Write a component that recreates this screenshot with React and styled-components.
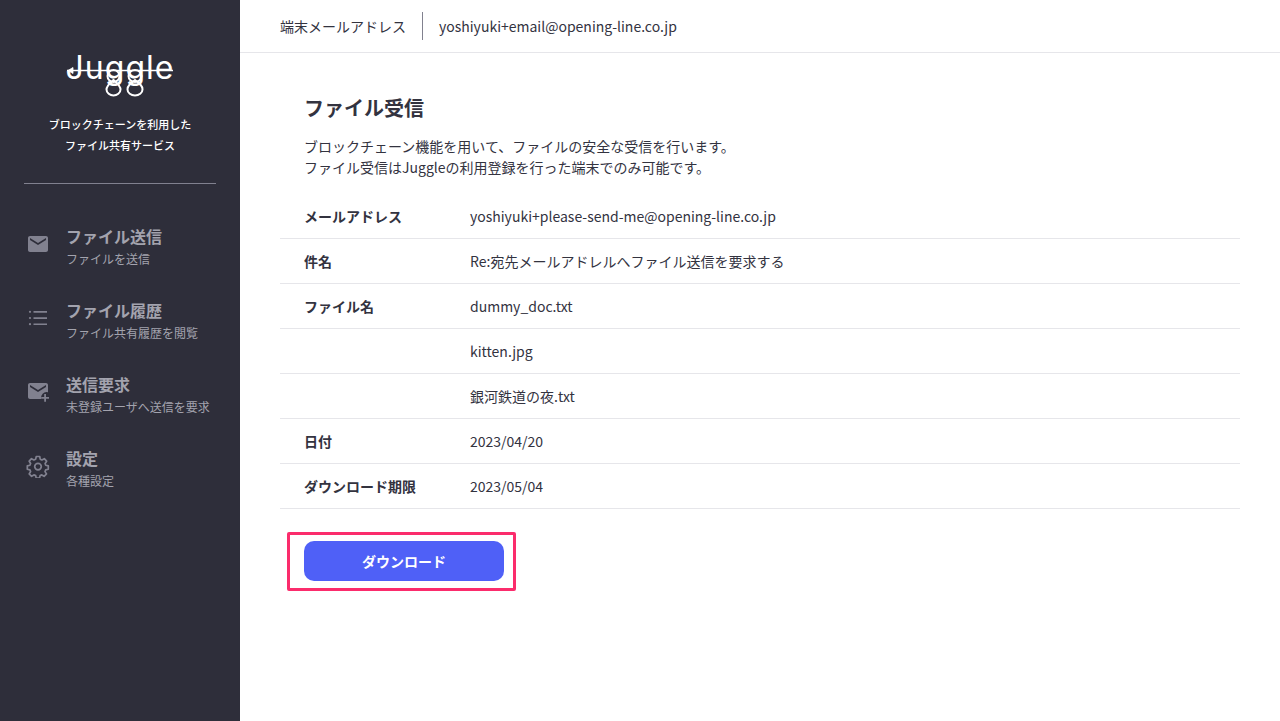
import styled, { createGlobalStyle } from 'styled-components';

const cjk = `"Noto Sans CJK JP", "Noto Sans", sans-serif`;

const GlobalStyle = createGlobalStyle`
    html, body {
        margin: 0;
        padding: 0;
        background-color: #ffffff;
    }
    * {
        box-sizing: border-box;
    }
`;

const MailIcon = () => (
    <svg width="24" height="24" viewBox="0 0 24 24" fill="#81818f">
        <path d="M20 4H4c-1.100 0-2 .9-2 2v12c0 1.100.9 2 2 2h16c1.100 0 2-.9 2-2V6c0-1.100-.9-2-2-2zm0 4-8 5-8-5V6l8 5 8-5v2z" />
    </svg>
);

const ListIcon = () => (
    <svg width="24" height="24" viewBox="0 0 24 24" fill="#81818f">
        <path d="M7.500 5h13.500v1.700H7.500zM7.500 11.200h13.500v1.700H7.500zM7.500 17.400h13.500v1.700H7.500z" />
        <circle cx="4" cy="5.800" r="1.100" />
        <circle cx="4" cy="12" r="1.100" />
        <circle cx="4" cy="18.200" r="1.100" />
    </svg>
);

const MailPlusIcon = () => (
    <svg width="24" height="24" viewBox="0 0 24 24" fill="#81818f">
        <path d="M20 3H4c-1.100 0-2 .9-2 2v12c0 1.100.9 2 2 2h11.200a5.500 5.500 0 0 1 6.800-6.700V5c0-1.100-.9-2-2-2zm0 4-8 5-8-5V5l8 5 8-5v2z" />
        <path d="M18.200 14h1.800v3h3v1.800h-3v3h-1.800v-3h-3V17h3z" />
    </svg>
);

const GearIcon = () => (
    <svg width="24" height="24" viewBox="0 0 24 24" fill="none" stroke="#81818f" strokeWidth="1.700" strokeLinejoin="round">
        <path d="M10.300 2.500h3.400l.5 2.700 1.700.8 2.400-1.300 2.300 2.500-1.500 2.300.6 1.700 2.600.7v3.300l-2.600.7-.7 1.700 1.500 2.300-2.400 2.400-2.300-1.400-1.700.7-.6 2.600h-3.300l-.5-2.600-1.800-.7-2.300 1.400-2.400-2.400 1.400-2.300-.7-1.700-2.600-.7v-3.300l2.600-.7.7-1.700-1.400-2.300 2.300-2.500 2.400 1.300 1.700-.8z" />
        <circle cx="12" cy="12.600" r="3.300" />
    </svg>
);

const menuItems = [
    { title: 'ファイル送信', sub: 'ファイルを送信', icon: <MailIcon /> },
    { title: 'ファイル履歴', sub: 'ファイル共有履歴を閲覧', icon: <ListIcon /> },
    { title: '送信要求', sub: '未登録ユーザへ送信を要求', icon: <MailPlusIcon /> },
    { title: '設定', sub: '各種設定', icon: <GearIcon /> },
];

const rows = [
    { label: 'メールアドレス', value: 'yoshiyuki+please-send-me@opening-line.co.jp' },
    { label: '件名', value: 'Re:宛先メールアドレルへファイル送信を要求する' },
    { label: 'ファイル名', value: 'dummy_doc.txt' },
    { label: '', value: 'kitten.jpg' },
    { label: '', value: '銀河鉄道の夜.txt' },
    { label: '日付', value: '2023/04/20' },
    { label: 'ダウンロード期限', value: '2023/05/04' },
];

function App() {
    return (
        <Page>
            <GlobalStyle />
            <Sidebar>
                <Brand>
                    <LogoWrap>
                        <LogoText>Juggle</LogoText>
                        <LogoLoops width="110" height="48" viewBox="0 0 110 48" fill="none" stroke="#ffffff" strokeWidth="2">
                            <path d="M2 20.500h106" strokeWidth="1.300" />
                            <path d="M8 17.500l-5 3 5 3z" fill="#ffffff" strokeWidth="0.800" />
                            <ellipse cx="48.500" cy="26" rx="6" ry="6" />
                            <path d="M48.500 30C45 33 41.500 35.500 41.500 39.500 41.500 43 45 45.500 48.500 45.500 52 45.500 55.500 43 55.500 39.500 55.500 35.500 52 33 48.500 30z" />
                            <ellipse cx="70" cy="26" rx="6.500" ry="6" />
                            <path d="M70 30C66 33 62.500 35.500 62.500 39.500 62.500 43 66 45.500 70 45.500 74 45.500 77.500 43 77.500 39.500 77.500 35.500 74 33 70 30z" />
                        </LogoLoops>
                    </LogoWrap>
                    <Tagline>
                        ブロックチェーンを利用した<br />ファイル共有サービス
                    </Tagline>
                </Brand>
                <Divider />
                <Menu>
                    {menuItems.map((item) => (
                        <MenuItem key={item.title}>
                            <MenuIcon>{item.icon}</MenuIcon>
                            <MenuText>
                                <MenuTitle>{item.title}</MenuTitle>
                                <MenuSub>{item.sub}</MenuSub>
                            </MenuText>
                        </MenuItem>
                    ))}
                </Menu>
            </Sidebar>
            <Main>
                <Header>
                    <HeaderLabel>端末メールアドレス</HeaderLabel>
                    <HeaderValue>yoshiyuki+email@opening-line.co.jp</HeaderValue>
                </Header>
                <Content>
                    <Title>ファイル受信</Title>
                    <Description>
                        ブロックチェーン機能を用いて、ファイルの安全な受信を行います。<br />
                        ファイル受信はJuggleの利用登録を行った端末でのみ可能です。
                    </Description>
                    <InfoList>
                        {rows.map((row) => (
                            <InfoRow key={row.value}>
                                <InfoLabel>{row.label}</InfoLabel>
                                <InfoValue>{row.value}</InfoValue>
                            </InfoRow>
                        ))}
                    </InfoList>
                    <ButtonArea>
                        <DownloadButton>ダウンロード</DownloadButton>
                        <Highlight />
                    </ButtonArea>
                </Content>
            </Main>
        </Page>
    );
}

const Page = styled.div`
    display: flex;
    height: 721px;
    overflow: hidden;
    font-family: ${cjk};
    color: #33333f;
`;

const Sidebar = styled.aside`
    flex: 0 0 240px;
    padding: 0 24px;
    background-color: #2e2e3a;
`;

const Brand = styled.div`
    display: flex;
    flex-direction: column;
    align-items: center;
    height: 184px;
    padding-top: 50px;
`;

const LogoWrap = styled.div`
    position: relative;
    width: 110px;
    height: 52px;
`;

const LogoText = styled.div`
    font-family: "Inter", "Noto Sans", sans-serif;
    font-size: 32px;
    font-weight: 400;
    line-height: 36px;
    text-align: center;
    letter-spacing: 1px;
    color: #ffffff;
`;

const LogoLoops = styled.svg`
    position: absolute;
    top: 0;
    left: 0;
`;

const Tagline = styled.p`
    margin: 12px 0 0;
    font-size: 11px;
    font-weight: 500;
    line-height: 21px;
    text-align: center;
    color: #ffffff;
`;

const Divider = styled.hr`
    margin: -1px 0 0;
    border: 0;
    border-top: 1px solid #81818f;
`;

const Menu = styled.nav`
    display: flex;
    flex-direction: column;
    gap: 20px;
    padding-top: 35px;
`;

const MenuItem = styled.div`
    display: flex;
    align-items: center;
    gap: 16px;
    height: 54px;
    color: #a3a3ae;
`;

const MenuIcon = styled.span`
    display: flex;
    flex: 0 0 26px;
    margin-bottom: 4px;
    padding-left: 2px;
`;

const MenuText = styled.div`
    display: flex;
    flex-direction: column;
`;

const MenuTitle = styled.span`
    font-size: 16px;
    font-weight: 700;
    line-height: 24px;
`;

const MenuSub = styled.span`
    margin-top: 1px;
    font-size: 12px;
    font-weight: 400;
    line-height: 20px;
`;

const Main = styled.main`
    flex: 1;
    min-width: 0;
`;

const Header = styled.header`
    display: flex;
    align-items: center;
    height: 53px;
    padding-left: 40px;
    border-bottom: 1px solid #e6e6ea;
    font-size: 14px;
`;

const HeaderLabel = styled.span`
    padding-right: 16px;
    border-right: 1px solid #81818f;
    line-height: 28px;
`;

const HeaderValue = styled.span`
    padding-left: 16px;
`;

const Content = styled.section`
    padding: 40px 40px 0;
`;

const Title = styled.h1`
    margin: 0 0 13px 24px;
    font-size: 20px;
    font-weight: 700;
    line-height: 30px;
`;

const Description = styled.p`
    margin: 0 0 16px 24px;
    font-size: 14px;
    line-height: 21px;
`;

const InfoList = styled.div`
    display: flex;
    flex-direction: column;
`;

const InfoRow = styled.div`
    display: flex;
    align-items: center;
    height: 45px;
    padding-left: 24px;
    border-bottom: 1px solid #e6e6ea;
    font-size: 14px;
`;

const InfoLabel = styled.span`
    flex: 0 0 166px;
    font-weight: 700;
`;

const InfoValue = styled.span`
    font-weight: 400;
`;

const ButtonArea = styled.div`
    position: relative;
    margin: 32px 0 0 24px;
    width: 200px;
`;

const DownloadButton = styled.button`
    display: block;
    width: 200px;
    height: 40px;
    border: none;
    border-radius: 10px;
    background-color: #4f60f7;
    color: #ffffff;
    font-family: ${cjk};
    font-size: 14px;
    font-weight: 700;
`;

const Highlight = styled.div`
    position: absolute;
    top: -9px;
    left: -17px;
    width: 229px;
    height: 59px;
    border: 3px solid #fb2c6c;
    border-radius: 2px;
`;

export default App;
